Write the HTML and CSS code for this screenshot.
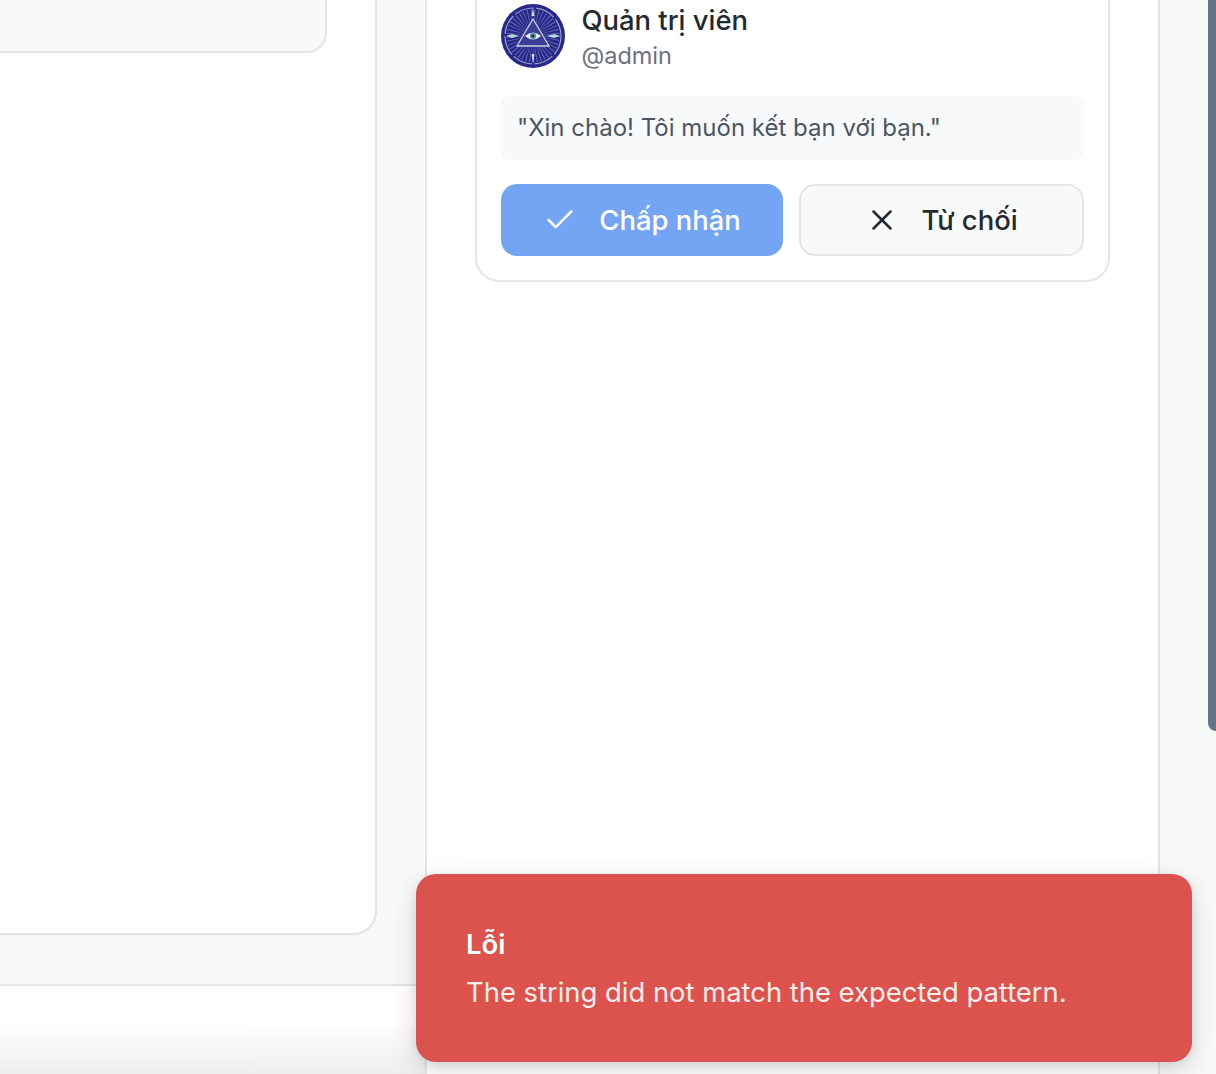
FILE: index.html
```html
<!DOCTYPE html>
<html lang="vi">
<head>
    <meta charset="UTF-8">
    <meta name="viewport" content="width=device-width, initial-scale=1.0">
    <title>Lời mời kết bạn</title>
    <link rel="stylesheet" href="styles.css">
</head>
<body>
    <div class="page">
        <div class="left-col">
            <div class="left-area">
                <div class="left-panel">
                    <div class="inner-box"></div>
                </div>
            </div>
            <div class="footer"></div>
        </div>

        <div class="right-col">
            <div class="right-panel">
                <div class="request-card">
                    <div class="user-row">
                        <svg class="avatar" viewBox="0 0 64 64">
                            <circle cx="32" cy="32" r="32" fill="#27298a"/>
                            <circle cx="32" cy="32" r="28" fill="none" stroke="#9a9fcb" stroke-width="1.2" stroke-dasharray="20 2.5"/>
                            <circle cx="32" cy="32" r="17" fill="none" stroke="#6e73b8" stroke-width="19" stroke-dasharray="0.6 2"/>
                            <path d="M5 32 L11 30 L18 32 L11 34 Z M59 32 L53 30 L46 32 L53 34 Z" fill="#b5dad8"/>
                            <path d="M32 60 L30.5 50 H33.5 Z M32 4 L30.5 12 H33.5 Z" fill="#d5d8e6"/>
                            <path d="M32 15 L16 42 H48 Z" fill="#3a3e97" stroke="#c4cfdc" stroke-width="1.3"/>
                            <path d="M24 32 Q32 25 40 32 Q32 39 24 32 Z" fill="#f3f4e2"/>
                            <circle cx="32" cy="32" r="3.2" fill="#5c9aa6"/>
                            <circle cx="32" cy="32" r="1.4" fill="#1d1f5e"/>
                        </svg>
                        <div class="user-info">
                            <div class="user-name">Quản trị viên</div>
                            <div class="user-handle">@admin</div>
                        </div>
                    </div>
                    <div class="message">"Xin chào! Tôi muốn kết bạn với bạn."</div>
                    <div class="actions">
                        <button class="btn btn-accept">
                            <svg class="btn-icon" viewBox="0 0 24 24"><polyline points="20 6 9 17 4 12"/></svg>
                            Chấp nhận
                        </button>
                        <button class="btn btn-reject">
                            <svg class="btn-icon" viewBox="0 0 24 24"><line x1="18" y1="6" x2="6" y2="18"/><line x1="6" y1="6" x2="18" y2="18"/></svg>
                            Từ chối
                        </button>
                    </div>
                </div>
            </div>
        </div>

        <div class="scroll-thumb"></div>

        <div class="toast">
            <div class="toast-title">Lỗi</div>
            <div class="toast-text">The string did not match the expected pattern.</div>
        </div>
    </div>
</body>
</html>
```

FILE: styles.css
```css
:root {
    --page-bg: #f8fafa;
    --border-color: #e2e6ea;
    --text-color: #24292f;
}

* {
    box-sizing: border-box;
}

html, body {
    margin: 0;
    height: 100%;
    overflow: hidden;
}

body {
    font-family: 'Inter', 'Liberation Sans', sans-serif;
    background-color: var(--page-bg);
    color: var(--text-color);
}

.page {
    position: relative;
    display: flex;
    height: 1074px;
    overflow: hidden;
}

.left-col {
    display: flex;
    flex-direction: column;
    width: 425px;
}

.left-area {
    flex: 1;
    padding: 0 48px 49px 0;
}

.left-panel {
    height: 100%;
    padding-right: 48px;
    background-color: #fff;
    border: 2px solid var(--border-color);
    border-width: 0 2px 2px 0;
    border-radius: 0 0 24px 0;
    box-shadow: 0 1px 2px rgba(0, 0, 0, 0.04);
}

.inner-box {
    height: 53px;
    background-color: var(--page-bg);
    border: 2px solid var(--border-color);
    border-width: 0 2px 2px 0;
    border-radius: 0 0 20px 0;
}

.footer {
    height: 90px;
    background: linear-gradient(to bottom, #fff 0, #fff 35px, #eeeeee 100%);
    border-top: 2px solid var(--border-color);
}

.right-col {
    width: 735px;
}

.right-panel {
    height: 100%;
    padding: 0 48px;
    background-color: #fff;
    border: 2px solid var(--border-color);
    border-width: 0 2px;
}

.request-card {
    padding: 0 24px 24px;
    background-color: #fff;
    border: 2px solid var(--border-color);
    border-top: none;
    border-radius: 0 0 24px 24px;
}

.user-row {
    display: flex;
    align-items: center;
    gap: 16.5px;
    height: 72px;
    margin-bottom: 24px;
}

.avatar {
    width: 64px;
    height: 64px;
    flex-shrink: 0;
}

.user-name {
    font-size: 27.4px;
    font-weight: 500;
    line-height: 40px;
}

.user-handle {
    font-size: 23.5px;
    line-height: 32px;
    color: #6b7280;
}

.message {
    height: 64px;
    margin-bottom: 24px;
    padding: 0 16px;
    font-size: 24px;
    line-height: 64px;
    color: #4b5563;
    background-color: #f8f9fb;
    border-radius: 8px;
}

.actions {
    display: flex;
    gap: 16px;
}

.btn {
    display: flex;
    align-items: center;
    justify-content: center;
    gap: 22px;
    height: 72px;
    font-family: inherit;
    font-size: 27.4px;
    font-weight: 500;
    border-radius: 16px;
    border: 2px solid transparent;
}

.btn-icon {
    width: 34px;
    height: 34px;
    fill: none;
    stroke: currentColor;
    stroke-width: 1.75;
    stroke-linecap: round;
    stroke-linejoin: round;
}

.btn-accept {
    width: 282px;
    color: #fff;
    background-color: #73a5f4;
}

.btn-reject {
    flex: 1;
    color: var(--text-color);
    background-color: var(--page-bg);
    border-color: var(--border-color);
}

.scroll-thumb {
    position: absolute;
    top: 0;
    right: 0;
    width: 8px;
    height: 731px;
    background-color: #667389;
    border-radius: 0 0 0 8px;
}

.toast {
    position: absolute;
    left: 416px;
    top: 874px;
    width: 776px;
    height: 188px;
    padding: 50px 50px 0;
    color: #fff;
    background-color: #dc524c;
    border-radius: 20px;
    box-shadow: 0 8px 28px rgba(0, 0, 0, 0.14), 0 3px 10px rgba(0, 0, 0, 0.08);
}

.toast-title {
    font-size: 27.4px;
    font-weight: 600;
    line-height: 40px;
}

.toast-text {
    margin-top: 8px;
    font-size: 27.4px;
    line-height: 40px;
    opacity: 0.9;
}
```
